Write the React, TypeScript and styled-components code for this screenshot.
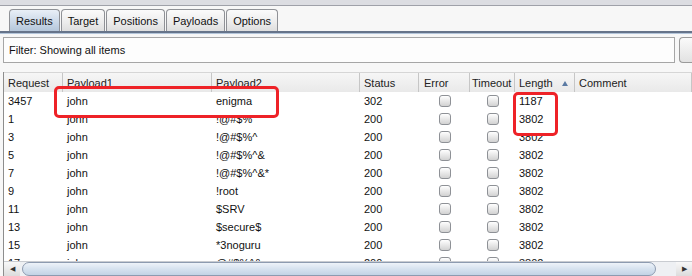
import React from 'react'
import styled, { createGlobalStyle } from 'styled-components'

const GlobalStyle = createGlobalStyle`
  html, body {
    margin: 0;
    padding: 0;
    background: #f7f7f7;
  }
  body {
    font-family: 'Liberation Sans', Arial, sans-serif;
    font-size: 11px;
    color: #111;
  }
`

const Page = styled.div`
  width: 692px;
  height: 276px;
  overflow: hidden;
  display: flex;
  flex-direction: column;
  background: #f7f7f7;
`

const TopBar = styled.div`
  height: 5px;
  background: #dcdde2;
  border-bottom: 1px solid #9fa1a9;
`

const TabStrip = styled.div`
  height: 25px;
  display: flex;
  align-items: flex-end;
  padding-left: 9px;
  box-sizing: border-box;
`

const Tab = styled.div<{ active?: boolean }>`
  height: 22px;
  box-sizing: border-box;
  padding: 0 6px;
  margin-right: 1px;
  display: flex;
  align-items: center;
  border: 1px solid #8f9196;
  border-bottom: none;
  border-radius: 4px 4px 0 0;
  font-size: 11px;
  color: #111;
  background: ${({ active }) =>
    active
      ? 'linear-gradient(#e9eff7, #c9d7e7 60%, #b4c6da)'
      : 'linear-gradient(#fbfbfb, #ececec 60%, #dedede)'};
`

const TabRule = styled.div`
  height: 3px;
  box-sizing: border-box;
  border-top: 2px solid #66748a;
  border-bottom: 1px solid #b3c5da;
`

const FilterRow = styled.div`
  display: flex;
  align-items: stretch;
  margin: 3px 0 9px 3px;
  height: 26px;
`

const FilterBox = styled.div`
  flex: 1;
  display: flex;
  align-items: center;
  padding-left: 5px;
  background: #fdfdfd;
  border: 1px solid #a6a6a6;
  color: #111;
`

const FilterButton = styled.div`
  width: 12px;
  margin-left: 4px;
  border: 1px solid #9a9a9a;
  border-right: none;
  border-radius: 4px 0 0 4px;
  background: linear-gradient(#fafafa, #e2e2e2);
`

const TableArea = styled.div`
  position: relative;
  flex: 1;
  display: flex;
  flex-direction: column;
  margin-left: 3px;
  border-left: 1px solid #8d8d8d;
  background: #fff;
  min-height: 0;
`

const columns = '59px 149px 148px 59px 51px 45px 60px 1fr'

const HeaderRow = styled.div`
  display: grid;
  grid-template-columns: ${columns};
  height: 20px;
  background: linear-gradient(#f6f6f6, #e9e9e9);
  border-top: 1px solid #d6d6d6;
  box-sizing: border-box;
`

const HeadCell = styled.div`
  display: flex;
  align-items: center;
  padding-left: 4px;
  border-right: 1px solid #c6c6c6;
  color: #222;
  white-space: nowrap;
  overflow: hidden;
  position: relative;
`

const SortArrow = styled.span`
  position: absolute;
  right: 6px;
  top: 8px;
  width: 0;
  height: 0;
  border-left: 3px solid transparent;
  border-right: 3px solid transparent;
  border-bottom: 5px solid #5b7aa3;
`

const Body = styled.div`
  height: 169px;
  overflow: hidden;
`

const Row = styled.div`
  display: grid;
  grid-template-columns: ${columns};
  height: 18px;
`

const Cell = styled.div<{ center?: boolean }>`
  display: flex;
  align-items: center;
  justify-content: ${({ center }) => (center ? 'center' : 'flex-start')};
  padding-left: ${({ center }) => (center ? '0' : '4px')};
  white-space: nowrap;
  overflow: hidden;
  color: #111;
`

const Check = styled.span`
  width: 12px;
  height: 12px;
  box-sizing: border-box;
  border: 1px solid #8e9196;
  border-radius: 3px;
  background: linear-gradient(#ffffff, #e4e4e4 60%, #d2d2d2);
`

const Highlight = styled.div`
  position: absolute;
  box-sizing: border-box;
  border: 3px solid #ee2227;
  border-radius: 5px;
  pointer-events: none;
`

const ScrollBar = styled.div`
  height: 15px;
  display: flex;
  align-items: stretch;
  background: #eef0f3;
  border-top: 1px solid #c9ccd1;
  box-sizing: border-box;
`

const ArrowButton = styled.div`
  width: 16px;
  display: flex;
  align-items: center;
  justify-content: center;
  font-size: 7px;
  color: #333;
  background: linear-gradient(#f8f8f8, #dcdcdc);
`

const Thumb = styled.div`
  flex: 1;
  margin: 0 20px 0 2px;
  border: 1px solid #8d9bb0;
  border-radius: 7px 7px 7px 7px / 7px 7px 7px 7px;
  background: linear-gradient(#eef3f9, #d6e2ef 50%, #c3d3e5);
`

type Item = { req: string; p1: string; p2: string; status: string; length: string }

const rows: Item[] = [
  { req: '3457', p1: 'john', p2: 'enigma', status: '302', length: '1187' },
  { req: '1', p1: 'john', p2: '!@#$%', status: '200', length: '3802' },
  { req: '3', p1: 'john', p2: '!@#$%^', status: '200', length: '3802' },
  { req: '5', p1: 'john', p2: '!@#$%^&', status: '200', length: '3802' },
  { req: '7', p1: 'john', p2: '!@#$%^&*', status: '200', length: '3802' },
  { req: '9', p1: 'john', p2: '!root', status: '200', length: '3802' },
  { req: '11', p1: 'john', p2: '$SRV', status: '200', length: '3802' },
  { req: '13', p1: 'john', p2: '$secure$', status: '200', length: '3802' },
  { req: '15', p1: 'john', p2: '*3noguru', status: '200', length: '3802' },
  { req: '17', p1: 'john', p2: '@#$%^&', status: '200', length: '3802' },
]

const tabs = ['Results', 'Target', 'Positions', 'Payloads', 'Options']

export default function App() {
  return (
    <Page>
      <GlobalStyle />
      <TopBar />
      <TabStrip>
        {tabs.map((t) => (
          <Tab key={t} active={t === 'Results'}>
            {t}
          </Tab>
        ))}
      </TabStrip>
      <TabRule />
      <FilterRow>
        <FilterBox>Filter: Showing all items</FilterBox>
        <FilterButton />
      </FilterRow>
      <TableArea>
        <HeaderRow>
          <HeadCell>Request</HeadCell>
          <HeadCell>Payload1</HeadCell>
          <HeadCell>Payload2</HeadCell>
          <HeadCell>Status</HeadCell>
          <HeadCell style={{ paddingLeft: 5 }}>Error</HeadCell>
          <HeadCell style={{ paddingLeft: 2 }}>Timeout</HeadCell>
          <HeadCell>
            Length
            <SortArrow />
          </HeadCell>
          <HeadCell>Comment</HeadCell>
        </HeaderRow>
        <Body>
          {rows.map((r) => (
            <Row key={r.req}>
              <Cell>{r.req}</Cell>
              <Cell>{r.p1}</Cell>
              <Cell>{r.p2}</Cell>
              <Cell>{r.status}</Cell>
              <Cell center>
                <Check />
              </Cell>
              <Cell center>
                <Check />
              </Cell>
              <Cell>{r.length}</Cell>
              <Cell />
            </Row>
          ))}
        </Body>
        <ScrollBar>
          <ArrowButton>◀</ArrowButton>
          <Thumb />
          <ArrowButton>▶</ArrowButton>
        </ScrollBar>
        <Highlight style={{ left: 50, top: 14, width: 225, height: 32 }} />
        <Highlight style={{ left: 509, top: 20, width: 45, height: 44 }} />
      </TableArea>
    </Page>
  )
}
